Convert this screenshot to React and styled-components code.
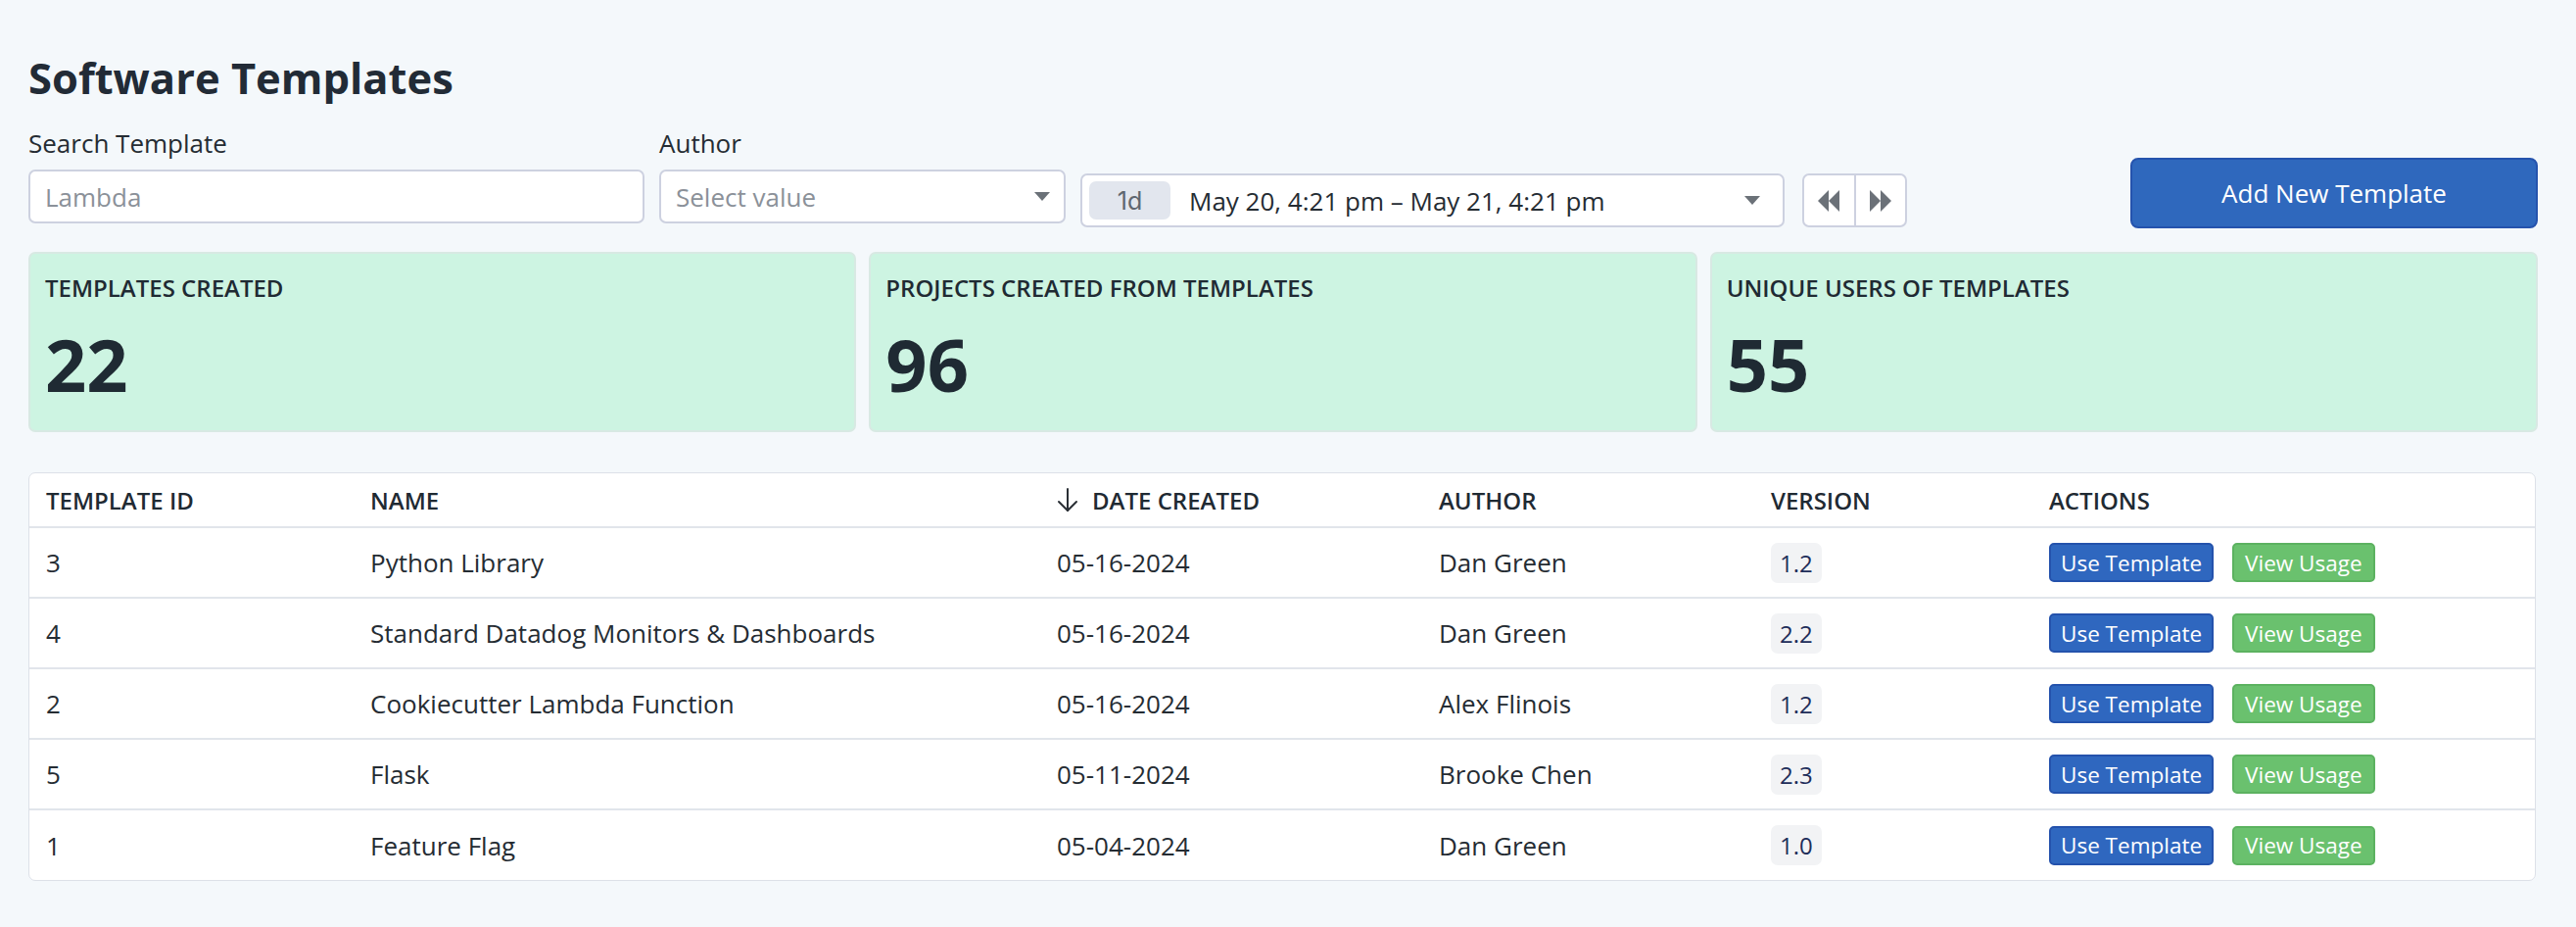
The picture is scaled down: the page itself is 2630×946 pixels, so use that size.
import styled, { createGlobalStyle } from 'styled-components';

const GlobalStyle = createGlobalStyle`
    body {
        margin: 0;
        background: #f4f8fb;
        font-family: "Open Sans", "Noto Sans", sans-serif;
        color: #252c33;
    }
    * { box-sizing: border-box; }
`;

const Page = styled.div`
    padding: 52px 39px 40px 29px;
`;

const Title = styled.h1`
    margin: 0;
    font-size: 43.5px;
    line-height: 55px;
    font-weight: 700;
    color: #222b36;
`;

const Filters = styled.div`
    display: flex;
    align-items: flex-end;
    margin-top: 24px;
`;

const Field = styled.div`
    display: flex;
    flex-direction: column;
    width: ${p => p.width}px;
    margin-right: 15px;
    margin-bottom: 5px;
`;

const Label = styled.label`
    font-size: 26px;
    line-height: 1.2;
    margin-bottom: 11px;
    color: #252c33;
`;

const Input = styled.input`
    height: 55px;
    border: 2px solid #cdd1e0;
    border-radius: 7px;
    background: #fff;
    padding: 0 15px;
    font-family: inherit;
    font-size: 26px;
    color: #252c33;
    outline: none;
    &::placeholder { color: #8b9199; }
`;

const Select = styled.div`
    height: 55px;
    border: 2px solid #cdd1e0;
    border-radius: 7px;
    background: #fff;
    padding: 0 14px 0 15px;
    display: flex;
    align-items: center;
    justify-content: space-between;
    font-size: 26px;
    color: #8b9199;
`;

const Caret = styled.span`
    width: 0;
    height: 0;
    border-left: 8px solid transparent;
    border-right: 8px solid transparent;
    border-top: 9px solid #6b7178;
`;

const DateRange = styled.div`
    width: 719px;
    height: 55px;
    border: 2px solid #cdd1e0;
    border-radius: 7px;
    background: #fff;
    display: flex;
    align-items: center;
    padding: 0 23px 0 7px;
    margin-bottom: 1px;
    font-size: 26px;
    color: #252c33;
`;

const Pill = styled.span`
    width: 83px;
    height: 39px;
    border-radius: 7px;
    background: #e2e6ee;
    color: #5f6670;
    font-family: Inter, "Open Sans", sans-serif;
    font-size: 25px;
    display: flex;
    align-items: center;
    justify-content: center;
    margin-right: 19px;
`;

const RangeText = styled.span`
    flex: 1;
`;

const NavGroup = styled.div`
    display: flex;
    height: 55px;
    width: 107px;
    margin-left: 18px;
    margin-bottom: 1px;
    border: 2px solid #cdd1e0;
    border-radius: 7px;
    background: #fff;
    overflow: hidden;
`;

const NavButton = styled.button`
    flex: 1;
    border: none;
    background: transparent;
    display: flex;
    align-items: center;
    justify-content: center;
    padding: 0;
    & + & { border-left: 2px solid #cdd1e0; }
`;

const AddButton = styled.button`
    margin-left: auto;
    width: 416px;
    height: 72px;
    background: #2f68bd;
    border: 2px solid #2553ad;
    border-radius: 8px;
    color: #fff;
    font-family: inherit;
    font-size: 26px;
    font-weight: 500;
`;

const Cards = styled.div`
    display: grid;
    grid-template-columns: repeat(3, 1fr);
    gap: 13px;
    margin-top: 24px;
`;

const Card = styled.div`
    height: 184px;
    background: #cdf4e2;
    border: 2px solid #d8e9e3;
    border-radius: 7px;
    padding: 21px 15px 0;
`;

const CardLabel = styled.div`
    font-size: 24px;
    line-height: 1.2;
    font-weight: 600;
    color: #1f2a33;
`;

const CardValue = styled.div`
    margin-top: 19px;
    font-size: 74px;
    line-height: 1.2;
    font-weight: 700;
    color: #1f2a33;
`;

const TableWrap = styled.div`
    margin-top: 41px;
    width: 2560px;
    background: #fff;
    border: 1px solid #dde1e8;
    border-radius: 7px;
    overflow: hidden;
`;

const Table = styled.table`
    width: 100%;
    border-collapse: collapse;
    table-layout: fixed;
`;

const Th = styled.th`
    width: ${p => p.width ? `${p.width}px` : 'auto'};
    height: 55px;
    padding: 0 17px;
    text-align: left;
    font-size: 24px;
    font-weight: 600;
    color: #1f2a33;
    border-bottom: 2px solid #e1e5eb;
    white-space: nowrap;
`;

const SortIcon = styled.span`
    display: inline-flex;
    vertical-align: -3px;
    margin-right: 14px;
`;

const Row = styled.tr`
    &:last-child td { border-bottom: none; }
`;

const Td = styled.td`
    height: 72px;
    padding: 0 17px;
    font-size: 26px;
    color: #252c33;
    border-bottom: 2px solid #e1e5eb;
    white-space: nowrap;
`;

const Version = styled.span`
    display: inline-flex;
    align-items: center;
    height: 41px;
    padding: 0 9px;
    border-radius: 7px;
    background: #f2f3f5;
    color: #1e2d5a;
    font-size: 24px;
`;

const Actions = styled.div`
    display: flex;
    gap: 19px;
`;

const ActionButton = styled.button`
    height: 40px;
    padding: 0 ${p => p.variant === 'green' ? 11 : 10}px;
    border-radius: 5px;
    font-family: inherit;
    font-size: 22.5px;
    color: #fff;
    background: ${p => p.variant === 'green' ? '#6ac16e' : '#2f67bf'};
    border: 2px solid ${p => p.variant === 'green' ? '#5cb260' : '#2452ac'};
`;

const Rewind = ({ flip }) => (
    <svg width="26" height="22" viewBox="0 0 26 22" style={flip ? { transform: 'scaleX(-1)' } : undefined}>
        <polygon points="13,0 13,22 2,11" fill="#6b7178" />
        <polygon points="24,0 24,22 13,11" fill="#6b7178" />
    </svg>
);

const ArrowDown = () => (
    <svg width="22" height="26" viewBox="0 0 22 26" fill="none" stroke="#2a2f35" strokeWidth="2" strokeLinecap="round" strokeLinejoin="round">
        <path d="M11 2v22" />
        <path d="M2 15l9 9 9-9" />
    </svg>
);

const stats = [
    { label: 'TEMPLATES CREATED', value: 22 },
    { label: 'PROJECTS CREATED FROM TEMPLATES', value: 96 },
    { label: 'UNIQUE USERS OF TEMPLATES', value: 55 },
];

const rows = [
    { id: 3, name: 'Python Library', date: '05-16-2024', author: 'Dan Green', version: '1.2' },
    { id: 4, name: 'Standard Datadog Monitors & Dashboards', date: '05-16-2024', author: 'Dan Green', version: '2.2' },
    { id: 2, name: 'Cookiecutter Lambda Function', date: '05-16-2024', author: 'Alex Flinois', version: '1.2' },
    { id: 5, name: 'Flask', date: '05-11-2024', author: 'Brooke Chen', version: '2.3' },
    { id: 1, name: 'Feature Flag', date: '05-04-2024', author: 'Dan Green', version: '1.0' },
];

function App() {
    return (
        <>
            <GlobalStyle />
            <Page>
                <Title>Software Templates</Title>
                <Filters>
                    <Field width={629}>
                        <Label>Search Template</Label>
                        <Input placeholder="Lambda" />
                    </Field>
                    <Field width={415}>
                        <Label>Author</Label>
                        <Select>
                            Select value
                            <Caret />
                        </Select>
                    </Field>
                    <DateRange>
                        <Pill>1d</Pill>
                        <RangeText>May 20, 4:21 pm – May 21, 4:21 pm</RangeText>
                        <Caret />
                    </DateRange>
                    <NavGroup>
                        <NavButton><Rewind /></NavButton>
                        <NavButton><Rewind flip /></NavButton>
                    </NavGroup>
                    <AddButton>Add New Template</AddButton>
                </Filters>

                <Cards>
                    {stats.map(s => (
                        <Card key={s.label}>
                            <CardLabel>{s.label}</CardLabel>
                            <CardValue>{s.value}</CardValue>
                        </Card>
                    ))}
                </Cards>

                <TableWrap>
                    <Table>
                        <thead>
                            <tr>
                                <Th width={331}>TEMPLATE ID</Th>
                                <Th width={701}>NAME</Th>
                                <Th width={390}><SortIcon><ArrowDown /></SortIcon>DATE CREATED</Th>
                                <Th width={339}>AUTHOR</Th>
                                <Th width={284}>VERSION</Th>
                                <Th>ACTIONS</Th>
                            </tr>
                        </thead>
                        <tbody>
                            {rows.map(r => (
                                <Row key={r.id}>
                                    <Td>{r.id}</Td>
                                    <Td>{r.name}</Td>
                                    <Td>{r.date}</Td>
                                    <Td>{r.author}</Td>
                                    <Td><Version>{r.version}</Version></Td>
                                    <Td>
                                        <Actions>
                                            <ActionButton>Use Template</ActionButton>
                                            <ActionButton variant="green">View Usage</ActionButton>
                                        </Actions>
                                    </Td>
                                </Row>
                            ))}
                        </tbody>
                    </Table>
                </TableWrap>
            </Page>
        </>
    );
}

export default App;
